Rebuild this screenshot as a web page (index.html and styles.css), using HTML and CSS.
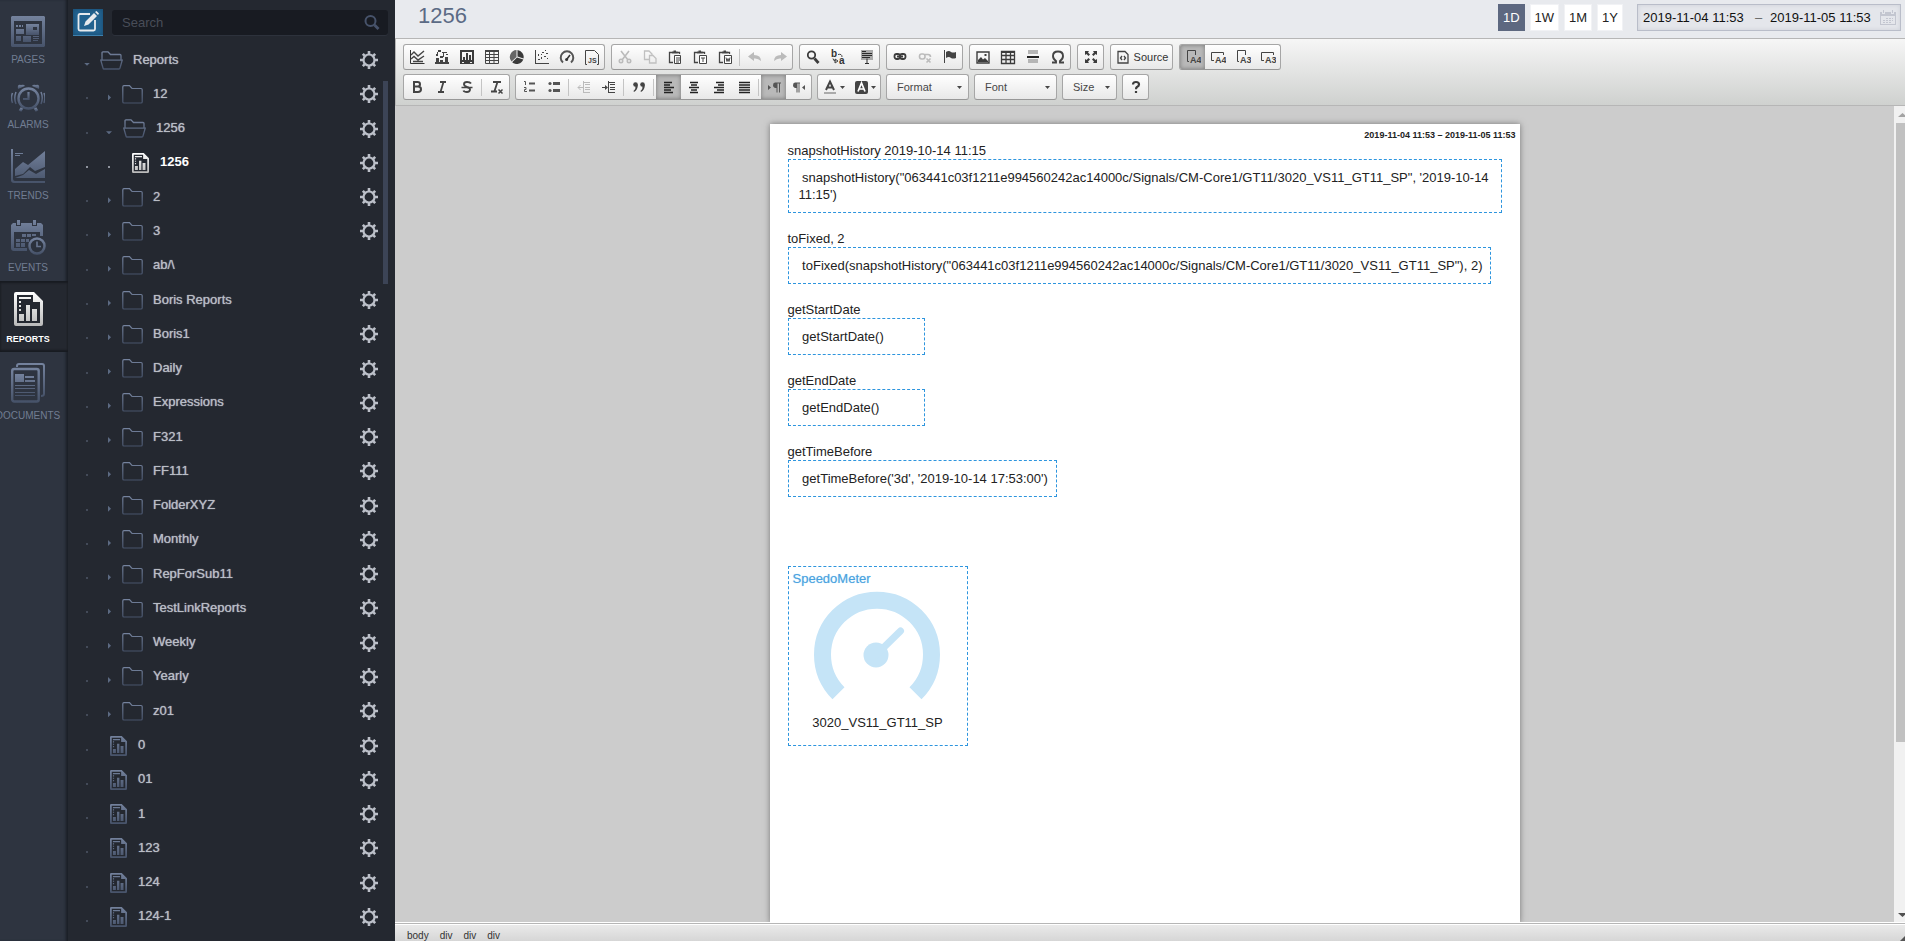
FILE: index.html
```html
<!DOCTYPE html>
<html lang="en">
<head>
<meta charset="utf-8">
<title>Reports - 1256</title>
<link rel="stylesheet" href="styles.css">
</head>
<body>
<svg class="sprite" aria-hidden="true">
  <defs>
    <linearGradient id="slate" x1="0" y1="0" x2="0" y2="1"><stop offset="0" stop-color="#74829d"/><stop offset="1" stop-color="#47536a"/></linearGradient>
    <linearGradient id="silver" x1="0" y1="0" x2="0" y2="1"><stop offset="0" stop-color="#ffffff"/><stop offset="1" stop-color="#b9b9b9"/></linearGradient>
  </defs>
  <symbol id="gear" viewBox="0 0 18 18"><circle cx="9" cy="9" r="5.5" fill="none" stroke="currentColor" stroke-width="2.2"/><path d="M9 0v3M9 15v3M0 9h3M15 9h3M2.8 2.8l2 2M13.200 13.200l2 2M2.800 15.200l2-2M13.200 4.800l2-2" stroke="currentColor" stroke-width="2.600"/></symbol>
  <symbol id="folder" viewBox="0 0 21 19"><path d="M.8 2Q.8.700 2 .700H7.500L10 3.500H19Q20.200 3.500 20.200 4.700V17Q20.200 18 19 18H2Q.8 18 .8 17Z" fill="none" stroke="url(#slate)" stroke-width="1.200"/></symbol>
  <symbol id="folder-open" viewBox="0 0 23 19"><path d="M2 9V2Q2 .8 3 .8H8L10.500 3.500H20Q21 3.500 21 4.500V9M.8 9.200H22.200L20 17Q19.700 18 19 18H4Q3.200 18 3 17Z" fill="none" stroke="url(#slate)" stroke-width="1.300"/></symbol>
  <symbol id="report" viewBox="0 0 29 34"><path fill-rule="evenodd" d="M2 0H20L29 9V32Q29 34 27 34H2Q0 34 0 32V2Q0 0 2 0ZM3 3V31H26V10H19V3ZM5 5H17V7H5ZM5 9H7V11H5ZM5 13H7V15H5ZM5 17H7V19H5ZM5 22H10V29H5ZM12 13H16V29H12ZM18 17H23V29H18Z"/></symbol>
  <symbol id="caret" viewBox="0 0 5 3"><path d="M0 0H5L2.500 3Z" fill="#474747"/></symbol>
  <symbol id="clip" viewBox="0 0 14 14"><path d="M5 12.500H1.500V2.500H4M9 2.500H11.500V4" fill="none" stroke="#444" stroke-width="1.300"/><path d="M4 3.500V1.500H5.500V.500H8V1.500H9.500V3.500Z" fill="#444"/></symbol>
</svg>

<div class="app">
  <nav class="nav" aria-label="Sections">
    <a class="nav-item" href="#pages">
      <svg width="34" height="31" viewBox="0 0 34 31" fill="url(#slate)"><path fill-rule="evenodd" d="M1 0H33L34 1V30L33 31H1L0 30V1ZM3 5V28H31V5Z"/><path d="M5 9h2v2H5zM8 9h2v2H8zM11 9h1v2h-1zM5 13h8v5H5zM5 20h5v5H5zM12 20h8v6h-8zM22 20h6v1h-6zM22 22h6v1h-6zM22 24h5v1h-5z"/><path fill-rule="evenodd" d="M15 8H28V19H15ZM22 11V14H26V11Z"/></svg>
      <span>PAGES</span>
    </a>
    <a class="nav-item" href="#alarms">
      <svg width="34" height="28" viewBox="0 0 34 28"><g fill="none" stroke="url(#slate)"><circle cx="17.500" cy="14.500" r="10" stroke-width="2.400"/><path d="M17.500 8V15H12" stroke-width="2.200"/><path d="M5 8Q2.500 14 5 20M1.500 9Q-.5 14 1.500 19M30 8Q32.500 14 30 20M33 9Q34.800 14 33 19" stroke-width="1.500"/><path d="M11 24l-2 3M24 24l2 3" stroke-width="3"/></g><path fill="url(#slate)" d="M7 5Q6 0 10 1 13 0 14 2ZM28 5Q29 0 25 1 22 0 21 2Z"/></svg>
      <span>ALARMS</span>
    </a>
    <a class="nav-item" href="#trends">
      <svg width="34" height="34" viewBox="0 0 34 34" fill="url(#slate)"><path d="M0 0H2V30Q2 32 4 32H34V34H3Q0 34 0 31ZM4 4h8v1H4zM4 6h5v1H4zM4 20L12 13 17 16 34 2V18L24 22 19 18 12 25 4 27ZM4 29L12 26 18 21 25 25 34 20V29Z"/></svg>
      <span>TRENDS</span>
    </a>
    <a class="nav-item" href="#events">
      <svg width="35" height="35" viewBox="0 0 35 35"><path fill="url(#slate)" fill-rule="evenodd" d="M2 3H5V6H10V3H21V6H26V3H30L32 5V16H29V12H3V28H16V31H3Q0 31 0 28V5ZM6 0H9V5H6ZM22 0H25V5H22ZM11 14h4v3h-4zM16 14h4v3h-4zM21 14h4v2h-4zM5 19h4v3H5zM10 19h4v3h-4zM5 23h4v4H5zM10 23h4v4h-4zM15 19h3v3h-3z"/><circle cx="26" cy="26" r="7.500" fill="#2b313c" stroke="url(#slate)" stroke-width="2.500"/><path d="M26 21.500V26.500H30" fill="none" stroke="#66738c" stroke-width="1.700"/></svg>
      <span>EVENTS</span>
    </a>
    <a class="nav-item is-active" href="#reports" aria-current="page">
      <svg width="29" height="34" fill="url(#silver)"><use href="#report"/></svg>
      <span>REPORTS</span>
    </a>
    <a class="nav-item" href="#documents">
      <svg width="34" height="40" viewBox="0 0 34 40"><g fill="none" stroke="url(#slate)" stroke-width="2"><path d="M6 4V3Q6 1 8 1H31Q33 1 33 3V31Q33 33 30 33"/><rect x="1.200" y="6" width="26.500" height="32.500" rx="2" stroke-width="2.400"/></g><path fill="url(#slate)" d="M4 11h9v8H4zM14 13h9v2h-9zM14 17h10v2H14zM4 22h20v1H4zM4 25h20v1H4zM4 29h20v1H4zM4 32h20v1H4z"/></svg>
      <span>DOCUMENTS</span>
    </a>
  </nav>

  <aside class="side">
    <div class="side-top">
      <button class="compose" type="button" aria-label="Edit"><svg width="22" height="22" viewBox="0 0 22 22"><path d="M13 3H3Q1.500 3 1.500 4.500V18Q1.500 19.500 3 19.500H16.500Q18 19.500 18 18V9" fill="none" stroke="#e6eaee" stroke-width="1.800"/><path d="M7 15L8.500 10.500 17 2 20 5 11.500 13.500ZM18 1L19.500 0 22 2.500 21 4Z" fill="#e6eaee"/></svg></button>
      <label class="search"><input type="text" placeholder="Search" aria-label="Search"><svg width="16" height="15" viewBox="0 0 16 15" fill="none" stroke="#47536b"><circle cx="6.500" cy="6" r="5" stroke-width="2"/><path d="M10.500 10L14.500 14" stroke-width="2.800"/></svg></label>
    </div>
    <div class="tree-wrap">
    <ul class="tree">
      <li class="row root"><i class="tw down"></i><svg class="fo"><use href="#folder-open"/></svg><a href="#r">Reports</a><button type="button" aria-label="Settings"><svg><use href="#gear"/></svg></button></li>
      <li class="row"><i class="dot"></i><i class="tw"></i><svg class="fc"><use href="#folder"/></svg><a href="#r">12</a><button type="button" aria-label="Settings"><svg><use href="#gear"/></svg></button></li>
      <li class="row"><i class="dot"></i><i class="tw down"></i><svg class="fo"><use href="#folder-open"/></svg><a href="#r">1256</a><button type="button" aria-label="Settings"><svg><use href="#gear"/></svg></button></li>
      <li class="row current"><i class="dot"></i><i class="dot"></i><svg class="rp"><use href="#report"/></svg><a href="#r">1256</a><button type="button" aria-label="Settings"><svg><use href="#gear"/></svg></button></li>
      <li class="row"><i class="dot"></i><i class="tw"></i><svg class="fc"><use href="#folder"/></svg><a href="#r">2</a><button type="button" aria-label="Settings"><svg><use href="#gear"/></svg></button></li>
      <li class="row"><i class="dot"></i><i class="tw"></i><svg class="fc"><use href="#folder"/></svg><a href="#r">3</a><button type="button" aria-label="Settings"><svg><use href="#gear"/></svg></button></li>
      <li class="row"><i class="dot"></i><i class="tw"></i><svg class="fc"><use href="#folder"/></svg><a href="#r">ab/\</a></li>
      <li class="row"><i class="dot"></i><i class="tw"></i><svg class="fc"><use href="#folder"/></svg><a href="#r">Boris Reports</a><button type="button" aria-label="Settings"><svg><use href="#gear"/></svg></button></li>
      <li class="row"><i class="dot"></i><i class="tw"></i><svg class="fc"><use href="#folder"/></svg><a href="#r">Boris1</a><button type="button" aria-label="Settings"><svg><use href="#gear"/></svg></button></li>
      <li class="row"><i class="dot"></i><i class="tw"></i><svg class="fc"><use href="#folder"/></svg><a href="#r">Daily</a><button type="button" aria-label="Settings"><svg><use href="#gear"/></svg></button></li>
      <li class="row"><i class="dot"></i><i class="tw"></i><svg class="fc"><use href="#folder"/></svg><a href="#r">Expressions</a><button type="button" aria-label="Settings"><svg><use href="#gear"/></svg></button></li>
      <li class="row"><i class="dot"></i><i class="tw"></i><svg class="fc"><use href="#folder"/></svg><a href="#r">F321</a><button type="button" aria-label="Settings"><svg><use href="#gear"/></svg></button></li>
      <li class="row"><i class="dot"></i><i class="tw"></i><svg class="fc"><use href="#folder"/></svg><a href="#r">FF111</a><button type="button" aria-label="Settings"><svg><use href="#gear"/></svg></button></li>
      <li class="row"><i class="dot"></i><i class="tw"></i><svg class="fc"><use href="#folder"/></svg><a href="#r">FolderXYZ</a><button type="button" aria-label="Settings"><svg><use href="#gear"/></svg></button></li>
      <li class="row"><i class="dot"></i><i class="tw"></i><svg class="fc"><use href="#folder"/></svg><a href="#r">Monthly</a><button type="button" aria-label="Settings"><svg><use href="#gear"/></svg></button></li>
      <li class="row"><i class="dot"></i><i class="tw"></i><svg class="fc"><use href="#folder"/></svg><a href="#r">RepForSub11</a><button type="button" aria-label="Settings"><svg><use href="#gear"/></svg></button></li>
      <li class="row"><i class="dot"></i><i class="tw"></i><svg class="fc"><use href="#folder"/></svg><a href="#r">TestLinkReports</a><button type="button" aria-label="Settings"><svg><use href="#gear"/></svg></button></li>
      <li class="row"><i class="dot"></i><i class="tw"></i><svg class="fc"><use href="#folder"/></svg><a href="#r">Weekly</a><button type="button" aria-label="Settings"><svg><use href="#gear"/></svg></button></li>
      <li class="row"><i class="dot"></i><i class="tw"></i><svg class="fc"><use href="#folder"/></svg><a href="#r">Yearly</a><button type="button" aria-label="Settings"><svg><use href="#gear"/></svg></button></li>
      <li class="row"><i class="dot"></i><i class="tw"></i><svg class="fc"><use href="#folder"/></svg><a href="#r">z01</a><button type="button" aria-label="Settings"><svg><use href="#gear"/></svg></button></li>
      <li class="row"><i class="dot"></i><svg class="rp"><use href="#report"/></svg><a href="#r">0</a><button type="button" aria-label="Settings"><svg><use href="#gear"/></svg></button></li>
      <li class="row"><i class="dot"></i><svg class="rp"><use href="#report"/></svg><a href="#r">01</a><button type="button" aria-label="Settings"><svg><use href="#gear"/></svg></button></li>
      <li class="row"><i class="dot"></i><svg class="rp"><use href="#report"/></svg><a href="#r">1</a><button type="button" aria-label="Settings"><svg><use href="#gear"/></svg></button></li>
      <li class="row"><i class="dot"></i><svg class="rp"><use href="#report"/></svg><a href="#r">123</a><button type="button" aria-label="Settings"><svg><use href="#gear"/></svg></button></li>
      <li class="row"><i class="dot"></i><svg class="rp"><use href="#report"/></svg><a href="#r">124</a><button type="button" aria-label="Settings"><svg><use href="#gear"/></svg></button></li>
      <li class="row"><i class="dot"></i><svg class="rp"><use href="#report"/></svg><a href="#r">124-1</a><button type="button" aria-label="Settings"><svg><use href="#gear"/></svg></button></li>
    </ul>
    <div class="tree-thumb"></div>
    </div>
  </aside>

  <main class="main">
    <header class="head">
      <h1>1256</h1>
      <div class="ranges">
        <button type="button" class="is-on">1D</button><button type="button">1W</button><button type="button">1M</button><button type="button">1Y</button>
      </div>
      <div class="dates">
        <input type="text" value="2019-11-04 11:53" aria-label="Start date"><span>–</span><input type="text" value="2019-11-05 11:53" aria-label="End date">
        <svg width="16" height="16" viewBox="0 0 16 16"><path fill="#c3c6d0" fill-rule="evenodd" d="M0 2H2V4H5V2H11V4H14V2H16V15H0ZM1 6V14H15V6ZM3 0h1v3H3zM12 0h1v3h-1zM6 8h2v1H6zM9 8h2v1H9zM12 8h1v1h-1zM3 10h2v1H3zM6 10h2v1H6zM9 10h2v1H9zM12 10h1v1h-1zM3 12h2v1H3zM6 12h2v1H6zM9 12h2v1H9z"/></svg>
      </div>
    </header>

    <div class="tools">
      <div class="tool-row">
        <div class="group">
          <button type="button" aria-label="Trend"><svg viewBox="0 0 16 16" fill="none" stroke="#444"><path d="M1.500 1V14.500H15.500" stroke="#333"/><path d="M2 6L5 3 9 7 15 2M2 10L5 7.500 9 11 15 7M4 12.500H14" stroke-width="1.400"/></svg></button>
          <button type="button" aria-label="Bars"><svg viewBox="0 0 16 16" fill="#444"><path d="M1 13h14v2H1zM2 9h3v4H2zM6 11h3v2H6zM11 8h3v5h-3zM4 1h3v2H4zM8 3h5v1H8zM2 5h2v2H2zM6 7h3v2H6zM12 5h2v1h-2zM3 3h1v3H3zM9 4h1v4H9z"/></svg></button>
          <button type="button" aria-label="Chart image"><svg viewBox="0 0 16 16" fill="#3c3c3c"><path fill-rule="evenodd" d="M1 1H15V15H1ZM3 3V11H13V3ZM3 13V14H5V13ZM11 13V14H13V13Z"/><path d="M4 8h2v3H4zM7 4h2v7H7zM10 6h2v5h-2z"/></svg></button>
          <button type="button" aria-label="Data table"><svg viewBox="0 0 16 16" fill="none" stroke="#444"><path d="M1.500 2.500H14.500V14.500H1.500ZM1 5.500H15M1 8.500H15M1 11.500H15M5.500 2V15M10 2V15"/><path d="M1 2H15" stroke-width="2"/></svg></button>
          <button type="button" aria-label="Pie"><svg viewBox="0 0 16 16" fill="#3a3a3a"><path d="M7.500 1V8L2.500 12.500A7 7 0 0 1 7.500 1Z" fill="#666"/><path d="M8.500 1A7 7 0 0 1 14.500 9.500L8.500 7.500Z"/><path d="M8 8.500L14.300 10.500A7 7 0 0 1 3.200 13.200Z"/></svg></button>
          <button type="button" aria-label="Scatter"><svg viewBox="0 0 16 16" fill="#444"><path d="M1 1h1v13h13v1H1zM4 10h2v1H4zM4 5h1v2H4zM7 8h1v2H7zM8 3h2v1H8zM10 7h2v1h-2zM12 4h2v1h-2zM7 5h1v1H7zM13 9h1v1h-1zM11 1h1v1h-1z"/></svg></button>
          <button type="button" aria-label="Gauge"><svg viewBox="0 0 16 16" fill="none" stroke="#555"><path d="M4 13.500A6.300 6.300 0 1 1 12 13.500" stroke-width="2"/><path d="M8 10L11 6" stroke-width="1.500" stroke="#333"/><circle cx="7.600" cy="10.400" r="1.500" fill="#333" stroke="none"/></svg></button>
          <button type="button" aria-label="Script"><svg viewBox="0 0 16 16"><path d="M3 15.500H1.500V1.500H10.500L14.500 5.500V15.500H13" fill="none" stroke="#444"/><text x="4" y="14" class="t7">JS</text></svg></button>
        </div>
        <div class="group">
          <button type="button" aria-label="Cut" disabled><svg viewBox="0 0 16 16" fill="none" stroke="#bbb" stroke-width="1.600"><path d="M4 2L11 11M12 2L5 11"/><circle cx="4" cy="12" r="1.700"/><circle cx="12" cy="12" r="1.700"/></svg></button>
          <button type="button" aria-label="Copy" disabled><svg viewBox="0 0 16 16" fill="none" stroke="#c0c0c0" stroke-width="1.300"><path d="M7 10.500H2.500V2H7L10 5V6"/><path d="M7.500 6.500H11L14 9.500V14H7.500Z"/></svg></button>
          <button type="button" aria-label="Paste"><svg viewBox="0 0 16 16"><use href="#clip" x="1" y="1" width="14" height="14"/><path d="M8 6.500H13.500V14.500H7.500V6.500Z" fill="#fff" stroke="#444"/><path d="M9 9h4M9 11h4M9 13h3" stroke="#444"/></svg></button>
          <button type="button" aria-label="Paste text"><svg viewBox="0 0 16 16"><use href="#clip" x="1" y="1" width="14" height="14"/><path d="M7.500 6.500H14.500V14.500H7.500Z" fill="#fff" stroke="#444"/><path d="M9 9h4M11 9v4" stroke="#444"/></svg></button>
          <button type="button" aria-label="Paste from Word"><svg viewBox="0 0 16 16"><use href="#clip" x="1" y="1" width="14" height="14"/><path d="M7.500 6.500H14.500V14.500H7.500Z" fill="#fff" stroke="#444"/><path d="M9 8.500l1 4 1-3 1 3 1-4" fill="none" stroke="#444"/></svg></button>
          <i class="sep"></i>
          <button type="button" aria-label="Undo" disabled><svg viewBox="0 0 16 16" fill="#bbb"><path d="M1 7.500L7 3V6Q14 6 14 12 11 9 7 9.500V12Z"/></svg></button>
          <button type="button" aria-label="Redo" disabled><svg viewBox="0 0 16 16" fill="#bbb"><path d="M15 7.500L9 3V6Q2 6 2 12 5 9 9 9.500V12Z"/></svg></button>
        </div>
        <div class="group">
          <button type="button" aria-label="Find"><svg viewBox="0 0 16 16" fill="none" stroke="#3c3c3c"><circle cx="6.500" cy="6" r="3.700" stroke-width="1.800"/><path d="M9.500 9.500L13.500 14" stroke-width="2.800"/></svg></button>
          <button type="button" aria-label="Replace"><svg viewBox="0 0 16 16"><text x="1" y="8" class="t10">b</text><text x="9" y="15" class="t10">a</text><path d="M3 9.500Q3 12 6 12M8 5.500Q12 4.500 12 8M5 10l3 2-3 2z" fill="none" stroke="#444"/></svg></button>
          <i class="gap"></i>
          <button type="button" aria-label="Select all"><svg viewBox="0 0 16 16"><path fill="#aaa" d="M2 1h12v10H2z"/><path d="M3 2.500h4M3 4.500h10M3 6.500h10M3 8.500h8M8 9.500v5M6 14.500h4" stroke="#2c2c2c"/></svg></button>
        </div>
        <div class="group">
          <button type="button" aria-label="Link"><svg viewBox="0 0 16 16" fill="none" stroke="#3c3c3c" stroke-width="1.800"><rect x="2.500" y="5" width="5.500" height="5" rx="2.200"/><rect x="8" y="5" width="5.500" height="5" rx="2.200"/><path d="M5 7.500H11"/></svg></button>
          <button type="button" aria-label="Unlink" disabled><svg viewBox="0 0 16 16" fill="none" stroke="#bbb" stroke-width="1.600"><rect x="2.500" y="5" width="5.500" height="5" rx="2.200"/><path d="M8 5.500h3Q13.500 5.500 13.500 8M9.500 9.500l4 4M13.500 9.500l-4 4"/></svg></button>
          <button type="button" aria-label="Anchor"><svg viewBox="0 0 16 16" fill="#444"><path d="M2 1h1v13H2zM4 3Q7 1 9 3 11 4 14 3V9Q11 10 9 9 7 7 4 9Z"/></svg></button>
        </div>
        <div class="group">
          <button type="button" aria-label="Image"><svg viewBox="0 0 16 16"><path d="M2 3H14V14H2Z" fill="none" stroke="#3c3c3c" stroke-width="1.400"/><path d="M3 13V11L6 8 8 10.500 10 9 13 12V13ZM9.500 5h2v2h-2z" fill="#3c3c3c"/></svg></button>
          <button type="button" aria-label="Table"><svg viewBox="0 0 16 16" fill="none" stroke="#3c3c3c"><path d="M1.500 2.500H14.500V14.500H1.500ZM1 6.500H15M1 10.500H15M6 3V15M10.500 3V15" stroke-width="1.300"/><path d="M1 3H15" stroke-width="2"/></svg></button>
          <button type="button" aria-label="Horizontal line"><svg viewBox="0 0 16 16"><path fill="#b5b5b5" d="M3 1h10v4H3zM3 10h10v4H3z"/><path fill="#222" d="M2 7h12v2H2z"/></svg></button>
          <button type="button" aria-label="Special character"><svg viewBox="0 0 16 16"><path d="M2 13.500H6V12Q3 10 3 7 3 2.500 8 2.500T13 7Q13 10 10 12V13.500H14" fill="none" stroke="#444" stroke-width="1.900"/></svg></button>
        </div>
        <div class="group">
          <button type="button" aria-label="Maximize"><svg viewBox="0 0 16 16" fill="#3c3c3c"><path d="M2 2h4L5 3.500 7 5.500 5.500 7 3.500 5 2 6zM14 2v4l-1.500-1-2 2L9 5.500l2-2L10 2zM2 14v-4l1.500 1 2-2L7 10.500l-2 2L6 14zM14 14h-4l1-1.500-2-2L10.500 9l2 2 1.500-1z"/></svg></button>
        </div>
        <div class="group">
          <button type="button" class="source"><svg viewBox="0 0 16 16" fill="none" stroke="#444" stroke-width="1.300"><path d="M3 2.500H10L13 5.500V14H3Z"/><path d="M7 7L5.500 9 7 11M9 7L10.500 9 9 11"/></svg>Source</button>
        </div>
        <div class="group">
          <button type="button" class="is-on" aria-label="A4 portrait"><svg viewBox="0 0 16 16"><path d="M4 12.500H2.500V1.500H10.500V6" fill="none" stroke="#444"/><text x="5" y="14" class="t9">A4</text></svg></button>
          <button type="button" aria-label="A4 landscape"><svg viewBox="0 0 16 16"><path d="M4 11.500H1.500V3.500H13.500V6" fill="none" stroke="#444"/><text x="5" y="14" class="t9">A4</text></svg></button>
          <button type="button" aria-label="A3 portrait"><svg viewBox="0 0 16 16"><path d="M4 12.500H2.500V1.500H10.500V6" fill="none" stroke="#444"/><text x="5" y="14" class="t9">A3</text></svg></button>
          <button type="button" aria-label="A3 landscape"><svg viewBox="0 0 16 16"><path d="M4 11.500H1.500V3.500H13.500V6" fill="none" stroke="#444"/><text x="5" y="14" class="t9">A3</text></svg></button>
        </div>
      </div>
      <div class="tool-row second">
        <div class="group">
          <button type="button" aria-label="Bold"><svg viewBox="0 0 16 16"><path d="M5 3H8.500Q11 3 11 5.300 11 7.500 8.500 7.500H5ZM5 7.500H9Q12 7.500 12 10.200 12 13 9 13H5Z" fill="none" stroke="#444" stroke-width="2"/></svg></button>
          <button type="button" aria-label="Italic"><svg viewBox="0 0 16 16"><path d="M6 3H12M4 13H10M9.500 3L6.500 13" fill="none" stroke="#444" stroke-width="1.800"/></svg></button>
          <button type="button" aria-label="Strikethrough"><svg viewBox="0 0 16 16"><path d="M12 4.500Q11 3 8 3 5 3 5 5.300 5 7 8 8 11.500 9 11 10.700 10.500 13 8 13 5 13 4.500 11.500" fill="none" stroke="#444" stroke-width="1.900"/><path d="M2.500 8.500H13.500" stroke="#444" stroke-width="1.300"/></svg></button>
          <i class="sep"></i>
          <button type="button" aria-label="Remove format"><svg viewBox="0 0 16 16"><path d="M4 3H12M2 12.500H8M8.500 3L5.500 12" fill="none" stroke="#444" stroke-width="1.800"/><path d="M9.500 10.500l4 4M13.500 10.500l-4 4" stroke="#444" stroke-width="1.500"/></svg></button>
        </div>
        <div class="group">
          <button type="button" aria-label="Numbered list"><svg viewBox="0 0 16 16" stroke="#555"><path d="M8 4.500h6M8 11.500h6" stroke-width="2"/><path d="M3 2.500h1.500V6M3 8.500h2v2H3.500v2H6" fill="none"/></svg></button>
          <button type="button" aria-label="Bulleted list"><svg viewBox="0 0 16 16" fill="#555"><circle cx="4" cy="4.500" r="1.600"/><circle cx="4" cy="11.500" r="1.600"/><path d="M7 3h7v3H7zM7 10h7v3H7z"/></svg></button>
          <i class="sep"></i>
          <button type="button" aria-label="Outdent" disabled><svg viewBox="0 0 16 16" stroke="#bbb"><path d="M8 3.500h6M9 5.500h5M9 8.500h5M9 10.500h5M8 13.500h6M7.500 2v12M2 8.500h5M4.500 6L2 8.500 4.500 11" fill="none"/></svg></button>
          <button type="button" aria-label="Indent"><svg viewBox="0 0 16 16" stroke="#444"><path d="M8 3.500h6M9 5.500h5M9 8.500h5M9 10.500h5M8 13.500h6M7.500 2v12M1 8.500h5" fill="none"/><path d="M4 6l3 2.500L4 11z" fill="#444" stroke="none"/></svg></button>
          <i class="sep"></i>
          <button type="button" aria-label="Quote"><svg viewBox="0 0 16 16" fill="#444"><circle cx="4.500" cy="5.500" r="2.300"/><circle cx="11.500" cy="5.500" r="2.300"/><path d="M6.800 5.500Q7 11 3 13L2.500 12Q5 10 4.500 7zM13.800 5.500Q14 11 10 13L9.500 12Q12 10 11.500 7z"/></svg></button>
          <i class="sep"></i>
          <button type="button" class="is-on" aria-label="Align left"><svg viewBox="0 0 16 16" stroke="#222" stroke-width="1.500"><path d="M3 3.500h8M3 6h6M3 8.500h10M3 11h7M3 13.500h9"/></svg></button>
          <button type="button" aria-label="Center"><svg viewBox="0 0 16 16" stroke="#222" stroke-width="1.500"><path d="M4 3.500h8M5 6h6M3 8.500h10M5 11h6M4 13.500h8"/></svg></button>
          <button type="button" aria-label="Align right"><svg viewBox="0 0 16 16" stroke="#222" stroke-width="1.500"><path d="M5 3.500h8M7 6h6M3 8.500h10M6 11h7M3 13.500h10"/></svg></button>
          <button type="button" aria-label="Justify"><svg viewBox="0 0 16 16" stroke="#222" stroke-width="1.500"><path d="M3 3.500h11M3 6h11M3 8.500h11M3 11h11M3 13.500h11"/></svg></button>
          <i class="sep"></i>
          <button type="button" class="is-on" aria-label="Left to right"><svg viewBox="0 0 16 16" fill="#555"><path d="M2 6l3 2.500L2 11zM9 3.500h6v1h-1v9h-1v-9h-1.500v9h-1V9Q7 9 7 6.200 7 3.500 9 3.500z"/></svg></button>
          <button type="button" aria-label="Right to left"><svg viewBox="0 0 16 16" fill="#555"><path d="M14 6l-3 2.500 3 2.500zM4 3.500h5v1H8.500v9h-1v-9H6.500v9h-1V9Q2 9 2 6.200 2 3.500 4 3.500z"/></svg></button>
        </div>
        <div class="group">
          <button type="button" class="drop" aria-label="Text color"><svg viewBox="0 0 16 16"><path d="M4 11L8 2.500 12 11M5.500 8.500H10.500" fill="none" stroke="#444" stroke-width="2"/><path d="M2 14h12" stroke="#aaa" stroke-width="2"/></svg><svg class="car"><use href="#caret"/></svg></button>
          <button type="button" class="drop" aria-label="Background color"><svg viewBox="0 0 16 16"><rect x="2" y="2" width="13" height="13" rx="2" fill="#444"/><path d="M5 12.500L8.500 4 12 12.500M6 10H11" fill="none" stroke="#fff" stroke-width="1.700"/></svg><svg class="car"><use href="#caret"/></svg></button>
        </div>
        <div class="group combo"><select aria-label="Format"><option>Format</option></select><svg class="car"><use href="#caret"/></svg></div>
        <div class="group combo"><select aria-label="Font"><option>Font</option></select><svg class="car"><use href="#caret"/></svg></div>
        <div class="group combo small"><select aria-label="Size"><option>Size</option></select><svg class="car"><use href="#caret"/></svg></div>
        <div class="group">
          <button type="button" aria-label="About"><svg viewBox="0 0 16 16"><path d="M5 5.500Q5 3 8 3T11 5.500Q11 7 9 8 8 8.700 8 10.300M8 12V14" fill="none" stroke="#3c3c3c" stroke-width="2.200"/></svg></button>
        </div>
      </div>
    </div>

    <div class="canvas">
      <div class="desk">
        <article class="paper">
          <p class="period">2019-11-04 11:53 – 2019-11-05 11:53</p>
          <section><p>snapshotHistory 2019-10-14 11:15</p><div class="expr">&nbsp;snapshotHistory("063441c03f1211e994560242ac14000c/Signals/CM-Core1/GT11/3020_VS11_GT11_SP", '2019-10-14 11:15')</div></section>
          <section><p>toFixed, 2</p><div class="expr">&nbsp;toFixed(snapshotHistory("063441c03f1211e994560242ac14000c/Signals/CM-Core1/GT11/3020_VS11_GT11_SP"), 2)</div></section>
          <section><p>getStartDate</p><div class="expr">&nbsp;getStartDate()</div></section>
          <section><p>getEndDate</p><div class="expr">&nbsp;getEndDate()</div></section>
          <section><p>getTimeBefore</p><div class="expr">&nbsp;getTimeBefore('3d', '2019-10-14 17:53:00')</div></section>
          <figure class="speedo">
            <h2>SpeedoMeter</h2>
            <svg width="126" height="110" viewBox="0 0 126 110"><path d="M24.500 103.200A54.500 54.500 0 1 1 101.500 103.200" fill="none" stroke="#c5e4f7" stroke-width="17"/><circle cx="62" cy="65" r="12.500" fill="#c5e4f7"/><path d="M62 65L86.500 41" stroke="#c5e4f7" stroke-width="7" stroke-linecap="round"/></svg>
            <figcaption>3020_VS11_GT11_SP</figcaption>
          </figure>
        </article>
      </div>
      <div class="scroll">
        <svg width="17" height="17" viewBox="0 0 17 17"><path d="M4 11h9L8.500 7z" fill="#a3a3a3"/></svg>
        <div class="track"><div class="thumb"></div></div>
        <svg width="17" height="17" viewBox="0 0 17 17"><path d="M4 7h9L8.500 11z" fill="#505050"/></svg>
      </div>
    </div>
    <footer class="path"><a href="#b">body</a><a href="#b">div</a><a href="#b">div</a><a href="#b">div</a><i class="grip"></i></footer>
  </main>
</div>
</body>
</html>
```
FILE: styles.css
```css
* { box-sizing: border-box; }
body { margin: 0; font: 13px/17px "Liberation Sans", Arial, sans-serif; color: #222; }
button, input, select { font: inherit; color: inherit; border: 0; padding: 0; margin: 0; background: none; border-radius: 0; }
p, h1, h2, figure, ul { margin: 0; padding: 0; font-weight: normal; }
a { color: inherit; text-decoration: none; }
svg { display: block; flex: none; }
.sprite { position: absolute; width: 0; height: 0; }
.app { display: flex; height: 100vh; overflow: hidden; }

/* section navigation */
.nav { width: 68px; flex: none; padding-top: 5px; background: #2e3440; box-shadow: inset -3px 0 3px -1px #191d24; overflow: hidden; }
.nav-item { display: flex; flex-direction: column; align-items: center; gap: 6px; padding: 11px 12px 6px 0; color: #717d92; font-size: 10px; line-height: 14px; }
.nav-item.is-active { background: #242830; color: #fff; font-weight: bold; box-shadow: inset 0 2px 2px #181b21, inset 0 -2px 2px #181b21; font-size: 9px; }

/* report tree */
.side { width: 327px; flex: none; display: flex; flex-direction: column; background: #242830; }
.side-top { display: flex; align-items: center; gap: 9px; padding: 9px 7px 7px 5px; }
.compose { width: 30px; height: 27px; display: grid; place-items: center; background: #22628f; box-shadow: inset 0 0 4px #184b70; border-bottom: 1px solid #3d80ad; }
.search { flex: 1; display: flex; align-items: center; height: 25px; padding: 0 8px 0 10px; background: #181b22; border-radius: 3px; box-shadow: 0 1px 0 #2d323c; }
.search input { flex: 1; min-width: 0; outline: 0; color: #c0c4cd; }
.search input::placeholder { color: #484d58; opacity: 1; }
.tree-wrap { flex: 1; display: flex; padding: 0 7px 7px 5px; }
.tree { flex: 1; display: grid; grid-auto-rows: minmax(34px, 1fr); list-style: none; }
.row { display: flex; align-items: center; color: #b9bdc6; text-shadow: 0 0 1px #b9bdc6; padding-left: 12px; }
.row a { margin: 0 auto 2px 10px; }
.row button { width: 18px; height: 18px; margin-right: 5px; color: #bcc0c9; }
.row button svg { width: 18px; height: 18px; }
.dot { width: 2px; height: 2px; margin: 8px 19px 0 1px; background: #434a58; }
.tw { width: 3px; height: 6px; margin: 6px 11px 0 1px; background: #5c6a82; clip-path: polygon(0 0, 100% 50%, 0 100%); }
.tw.down { width: 6px; height: 3px; margin: 8px 11px 0 -1px; clip-path: polygon(0 0, 100% 0, 50% 100%); }
.root .tw { margin-right: 10px; }
.fc { width: 21px; height: 19px; }
.fo { width: 23px; height: 19px; }
.rp { width: 17px; height: 20px; fill: url(#slate); margin: 0 1px 0 3px; }
.current { color: #fff; font-weight: bold; text-shadow: none; }
.current .rp { fill: url(#silver); }
.current .dot { background: #8f949e; }
.tree-thumb { width: 5px; height: 203px; margin-top: 38px; background: #3c4456; }

/* page header */
.main { flex: 1; min-width: 0; display: flex; flex-direction: column; background: #ccc; }
.head { display: flex; align-items: flex-start; height: 38px; padding: 4px 4px 0 23px; background: #e8eaee; }
.head h1 { margin-right: auto; font-size: 22px; line-height: 24px; color: #5b6a85; }
.ranges { display: flex; gap: 5px; margin-right: 14px; }
.ranges button { height: 27px; padding: 0 4px; background: #fff; border: 1px solid #f1f2f5; color: #222; }
.ranges .is-on { background: #5d6880; border-color: #5d6880; color: #fff; }
.dates { display: flex; align-items: center; width: 264px; height: 27px; padding: 0 4px 0 5px; border: 1px solid #b9bdc9; background: #e4e6eb; box-shadow: inset 0 0 4px #ccd0d8; color: #111; }
.dates input { width: 104px; }
.dates span { width: 23px; text-align: center; color: #666; }
.dates svg { margin-left: auto; }

/* editor toolbar */
.tools { display: flex; flex-direction: column; gap: 4px; padding: 5px 8px 5px 7px; border: 1px solid #b6b6b6; border-right: 0; background: linear-gradient(#f6f6f6, #cfd1cf); }
.tool-row { display: flex; gap: 6px; }
.tool-row.second { gap: 5px; }
.group { display: flex; height: 26px; border: 1px solid #a6a6a6; border-bottom-color: #979797; border-radius: 3px; background: linear-gradient(#fff, #e8e8e8); overflow: hidden; }
.group button { display: flex; align-items: center; justify-content: center; width: 25px; height: 24px; }
.group button svg { width: 16px; height: 16px; }
.group .is-on { background: #b9b9b9; box-shadow: inset 0 0 4px #777; }
.sep { width: 1px; height: 17px; margin: 4px 2px; background: #c4c4c4; }
.gap { width: 4px; }
.group .source { width: 61px; gap: 3px; font-size: 11px; color: #333; }
.group .drop { width: 31px; gap: 2px; }
.group button .car, .car { width: 5px; height: 3px; }
.combo { width: 83px; align-items: center; padding-right: 6px; }
.combo.small { width: 55px; }
.combo select { flex: 1; min-width: 0; height: 24px; appearance: none; padding-left: 10px; font-size: 11px; color: #474747; }
.t7 { font-size: 7px; font-weight: bold; fill: #444; }
.t9 { font-size: 9px; font-weight: bold; fill: #444; }
.t10 { font-size: 10px; font-weight: bold; fill: #333; }

/* document */
.canvas { flex: 1; min-height: 0; display: flex; }
.desk { flex: 1; display: flex; justify-content: center; padding-top: 18px; overflow: hidden; }
.paper { width: 750px; padding: 0 18px; background: #fff; box-shadow: 0 0 6px #777; }
.period { height: 18px; margin-right: -14px; font-size: 9px; line-height: 22px; font-weight: bold; text-align: right; }
.paper section { margin-bottom: 17px; }
.expr { width: fit-content; min-width: 137px; max-width: 100%; padding: 9px 8px 9px 10px; border: 1px dashed #2d95de; }
.speedo { width: 180px; height: 180px; margin-top: 69px; display: flex; flex-direction: column; align-items: center; border: 1px dashed #2d95de; }
.speedo h2 { align-self: flex-start; margin: 3px 4px; font-size: 13px; line-height: 17px; color: #4aa3e0; text-shadow: 0 0 1px #9fcff0; }
.speedo svg { margin-right: 2px; }
.speedo figcaption { margin-top: 14px; }
.scroll { width: 11px; display: flex; flex-direction: column; overflow: hidden; background: #f1f1f1; }
.track { flex: 1; }
.thumb { width: 13px; height: 79%; margin-left: 2px; background: #c1c1c1; }
.path { display: flex; gap: 11px; height: 18px; padding: 5px 0 0 12px; position: relative; border-top: 1px solid #b6b6b6; box-shadow: 0 -1px #fff, inset 0 1px #fff; background: linear-gradient(#ebebeb, #d6d6d6); font-size: 10px; line-height: 14px; color: #333; }
.grip { position: absolute; right: 0; bottom: 0; width: 5px; height: 5px; background: #555; clip-path: polygon(100% 0, 100% 100%, 0 100%); }
```
